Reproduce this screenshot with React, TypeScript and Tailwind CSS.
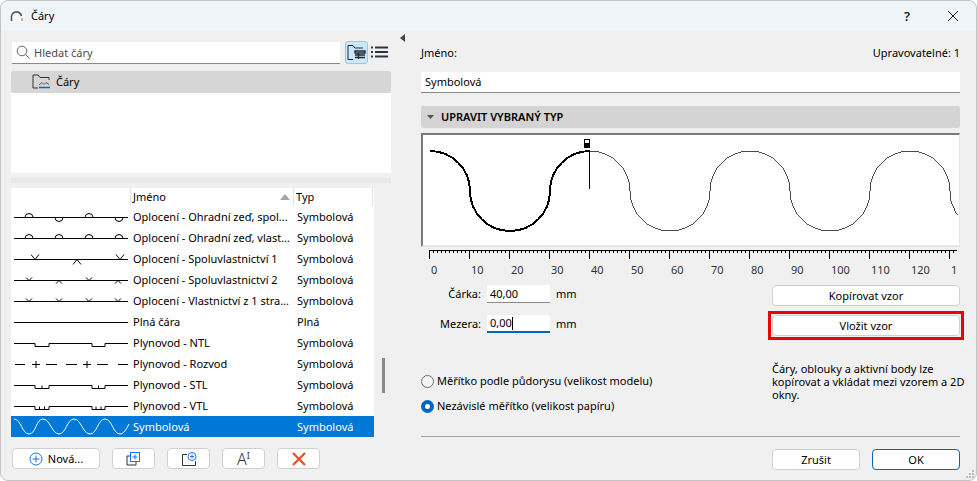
import React from "react";

type Swatch = "arcAlt" | "arcUp" | "xBig" | "xSmallAlt" | "xSmall" | "solid" | "ntl" | "rozvod" | "stl" | "vtl" | "wave";

const rows: { name: string; type: string; swatch: Swatch }[] = [
  { name: "Oplocení - Ohradní zeď, spol...", type: "Symbolová", swatch: "arcAlt" },
  { name: "Oplocení - Ohradní zeď, vlast...", type: "Symbolová", swatch: "arcUp" },
  { name: "Oplocení - Spoluvlastnictví 1", type: "Symbolová", swatch: "xBig" },
  { name: "Oplocení - Spoluvlastnictví 2", type: "Symbolová", swatch: "xSmallAlt" },
  { name: "Oplocení - Vlastnictví z 1 stra...", type: "Symbolová", swatch: "xSmall" },
  { name: "Plná čára", type: "Plná", swatch: "solid" },
  { name: "Plynovod - NTL", type: "Symbolová", swatch: "ntl" },
  { name: "Plynovod - Rozvod", type: "Symbolová", swatch: "rozvod" },
  { name: "Plynovod - STL", type: "Symbolová", swatch: "stl" },
  { name: "Plynovod - VTL", type: "Symbolová", swatch: "vtl" },
  { name: "Symbolová", type: "Symbolová", swatch: "wave" },
];

function swatchPath(kind: Swatch): string {
  const y = 11.5;
  const line = `M3 ${y}H117`;
  const arc = (x: number, up: boolean) => `M${x - 4} ${y}a4 4 0 0 ${up ? 1 : 0} 8 0`;
  const vee = (x: number, h: number, w: number, up: boolean) =>
    `M${x - w} ${up ? y - h : y + h}L${x} ${y}L${x + w} ${up ? y - h : y + h}`;
  const step = "M3 11.5H24V14.5H38V11.5H81V14.5H94V11.5H117";
  switch (kind) {
    case "arcAlt":
      return `${line}${arc(18, true)}${arc(48, false)}${arc(78, true)}${arc(108, false)}`;
    case "arcUp":
      return `${line}${arc(18, true)}${arc(48, true)}${arc(78, true)}${arc(108, true)}`;
    case "xBig":
      return `${line}${vee(24, 5, 4, true)}${vee(66, 5, 4, false)}${vee(109, 5, 4, true)}`;
    case "xSmallAlt":
      return `${line}${vee(18, 3, 3, true)}${vee(48, 3, 3, false)}${vee(78, 3, 3, true)}${vee(107, 3, 3, false)}`;
    case "xSmall":
      return `${line}${vee(18, 3, 3, true)}${vee(48, 3, 3, true)}${vee(78, 3, 3, true)}${vee(107, 3, 3, true)}`;
    case "solid":
      return line;
    case "ntl":
      return step;
    case "rozvod":
      return `M4 ${y}H14M35 ${y}H46M55 ${y}H66M86 ${y}H97M107 ${y}H117M21 ${y}H29M25 8V15M72 ${y}H80M76 8V15`;
    case "stl":
      return `${step}M31 11.5V14.5M87.5 11.5V14.5`;
    case "vtl":
      return `${step}M28.5 11.5V14.5M33.5 11.5V14.5M85 11.5V14.5M90 11.5V14.5`;
    default:
      return "M3 3C10 3 11 18 18 18S25 3 32 3S41 18 48 18S56 3 63 3S72 18 79 18S87 3 94 3S102 18 109 18C113 18 116 12 118 8";
  }
}

function LineSwatch({ kind }: { kind: Swatch }) {
  const selected = kind === "wave";
  return (
    <svg width="120" height="21" viewBox="0 0 120 21" fill="none" className="shrink-0">
      <path d={swatchPath(kind)} stroke={selected ? "#ffffff" : "#000000"} strokeWidth="1" />
    </svg>
  );
}

function Ruler() {
  const ticks: React.ReactNode[] = [];
  for (let i = 0; i <= 131; i++) {
    const x = 8.5 + i * 4;
    const major = i % 10 === 0;
    ticks.push(<line key={i} x1={x} x2={x} y1={0} y2={major ? 9 : 3} stroke="#000" strokeWidth="1" />);
  }
  return (
    <svg width="539" height="12" viewBox="0 0 539 12" className="block">
      <line x1="8" x2="536" y1="0.5" y2="0.5" stroke="#000" />
      {ticks}
    </svg>
  );
}

function RulerLabels() {
  const labels = [0, 10, 20, 30, 40, 50, 60, 70, 80, 90, 100, 110, 120, 1];
  return (
    <div className="mt-[1px] flex h-[14px] overflow-hidden text-[#333]">
      {labels.map((label, i) => (
        <span key={i} className="w-[40px] shrink-0 pl-[4px] text-[11px] leading-[14px] first:ml-[6px]">
          {label}
        </span>
      ))}
    </div>
  );
}

function Button({ children, className }: { children: React.ReactNode; className?: string }) {
  return (
    <button
      className={`flex h-[21px] items-center justify-center rounded-[4px] border border-[#d0d0d0] bg-white text-[11px] text-black ${className ?? ""}`}
    >
      {children}
    </button>
  );
}

export default function App() {
  return (
    <div
      className="h-[481px] w-[977px] overflow-hidden bg-white"
      style={{ fontFamily: '"Noto Sans", sans-serif' }}
    >
      <div className="relative flex h-full flex-col rounded-[8px] border border-[#c4c4c4] bg-[#f0f0f0] text-[11px] leading-[14px] text-black">
        {/* title bar */}
        <div className="flex h-[30px] shrink-0 items-center rounded-t-[8px] bg-[#eff4f9]">
          <svg width="14" height="14" viewBox="0 0 14 14" fill="none" className="ml-[9px]">
            <rect width="14" height="14" fill="#f7f7f7" />
            <path d="M1.5 12V9a5 5 0 0 1 10-2" stroke="#555" strokeWidth="1.6" />
            <path d="M12 9v3" stroke="#999" strokeWidth="1.4" />
          </svg>
          <span className="ml-[7px] text-[11px]">Čáry</span>
          <span className="ml-auto mr-[37px] text-[13px] font-semibold text-[#222]">?</span>
          <svg width="12" height="12" viewBox="0 0 12 12" className="mr-[17px]">
            <path d="M1 1L11 11M11 1L1 11" stroke="#222" strokeWidth="1" />
          </svg>
        </div>

        <div className="flex flex-1">
          {/* left panel */}
          <div className="w-[399px] shrink-0 pl-[10px] pt-[10px]">
            <div className="flex h-[23px] items-start">
              <div className="ml-[1px] mt-[1px] flex h-[22px] w-[328px] items-center border-b border-[#8a8a8a] bg-white">
                <svg width="15" height="15" viewBox="0 0 15 15" fill="none" className="ml-[4px]">
                  <circle cx="6" cy="6" r="4.8" stroke="#666" />
                  <path d="M9.5 9.5L13.5 13.5" stroke="#666" />
                </svg>
                <span className="ml-[3px] text-[#4d4d4d]">Hledat čáry</span>
              </div>
              <div className="ml-[5px] flex h-[23px] w-[23px] items-center justify-center rounded-[3px] border border-[#8fcbf5] bg-[#cde8fb]">
                <svg width="19" height="17" viewBox="0 0 19 17" fill="none">
                  <path d="M1 15.5V1.5H6L8 4H16M1 15.5H6" stroke="#1f2a33" />
                  <path d="M8 7H18V9H8ZM8 11H18M8 13.5H18M11.5 9V15" stroke="#1f2a33" strokeWidth="1.4" />
                </svg>
              </div>
              <svg width="17" height="12" viewBox="0 0 17 12" className="ml-[3px] mt-[5px]">
                <path d="M0 1.5H2M4 1.5H17M0 6H2M4 6H17M0 10.5H2M4 10.5H17" stroke="#2b3640" strokeWidth="2" />
              </svg>
            </div>

            <div className="mt-[7px] h-[102px] w-[380px] bg-white">
              <div className="flex h-[22px] items-center rounded-[2px] bg-[#d6d6d6]">
                <svg width="19" height="16" viewBox="0 0 19 16" fill="none" className="ml-[21px]">
                  <path d="M1 14V1H6L8 3.5H17V6M1 14H6" stroke="#333" />
                  <path d="M7 11L10 8.5L12 10.5L14 8.5L17 10.5" stroke="#333" strokeWidth="0.8" />
                  <path d="M7 13.5H18" stroke="#0a64c8" strokeWidth="1.5" />
                </svg>
                <span className="ml-[5px]">Čáry</span>
              </div>
            </div>

            <div className="mt-[5px] h-[5px] w-[380px] bg-[#e8e8e8]" />

            <div className="mt-[5px] flex items-start">
              <div className="w-[363px] bg-white">
                <div className="flex h-[18px] items-center">
                  <div className="h-full w-[120px] border-r border-[#e4e4e4]" />
                  <div className="flex h-full w-[163px] items-center justify-between border-r border-[#e4e4e4] pl-[2px] pr-[3px]">
                    <span>Jméno</span>
                    <svg width="10" height="6" viewBox="0 0 10 6">
                      <path d="M0 6L5 0L10 6Z" fill="#a6a6a6" />
                    </svg>
                  </div>
                  <div className="flex h-full w-[79px] items-center border-r border-[#e4e4e4] pl-[2px]">Typ</div>
                </div>
                {rows.map((row) => (
                  <div
                    key={row.name}
                    className={`flex h-[21px] items-center ${row.swatch === "wave" ? "bg-[#0078d7] text-white" : ""}`}
                  >
                    <LineSwatch kind={row.swatch} />
                    <span className="w-[163px] shrink-0 whitespace-nowrap pl-[2px]">{row.name}</span>
                    <span className="pl-[3px]">{row.type}</span>
                  </div>
                ))}
              </div>
              <div className="ml-[8px] mt-[170px] h-[35px] w-[3px] bg-[#8a8a8a]" />
            </div>

            <div className="mt-[11px] flex">
              <Button className="ml-[1px] w-[88px]">
                <svg width="14" height="14" viewBox="0 0 14 14" fill="none" className="mr-[5px]">
                  <circle cx="7" cy="7" r="6" stroke="#1a73e8" />
                  <path d="M7 3.5V10.5M3.5 7H10.5" stroke="#1a73e8" />
                </svg>
                Nová...
              </Button>
              <Button className="ml-[12px] w-[43px]">
                <svg width="15" height="14" viewBox="0 0 15 14" fill="none">
                  <path d="M4 4H1V13H10V10" stroke="#333" />
                  <rect x="4.5" y="0.5" width="9" height="9" stroke="#1a73e8" />
                  <path d="M9 2.5V7.5M6.5 5H11.5" stroke="#1a73e8" />
                </svg>
              </Button>
              <Button className="ml-[12px] w-[43px]">
                <svg width="16" height="14" viewBox="0 0 16 14" fill="none">
                  <path d="M1.5 13.5V2.5H6M1.5 13.5H14.5V9" stroke="#333" />
                  <circle cx="11" cy="4.5" r="4" stroke="#1a73e8" />
                  <path d="M11 2.5V6.5M9 4.5H13" stroke="#1a73e8" />
                </svg>
              </Button>
              <Button className="ml-[12px] w-[43px]">
                <span className="text-[16px] font-light leading-none text-[#333]">A</span>
                <span className="mb-[6px] text-[9px] leading-none text-[#333]">I</span>
              </Button>
              <Button className="ml-[12px] w-[43px]">
                <svg width="14" height="14" viewBox="0 0 14 14">
                  <path d="M1 1L13 13M13 1L1 13" stroke="#f04a23" strokeWidth="2.2" />
                </svg>
              </Button>
            </div>
          </div>

          {/* right panel */}
          <div className="relative w-[576px] shrink-0 pl-[21px] pr-[16px] pt-[15px]">
            <svg width="5" height="8" viewBox="0 0 5 8" className="absolute left-[0px] top-[3px]">
              <path d="M5 0V8L0 4Z" fill="#444" />
            </svg>

            <div className="flex h-[14px] justify-between">
              <span>Jméno:</span>
              <span>Upravovatelné: 1</span>
            </div>
            <div className="mt-[12px] flex h-[21px] items-center border-b border-[#8a8a8a] bg-white pl-[4px]">
              Symbolová
            </div>
            <div className="mt-[13px] flex h-[22px] items-center rounded-[2px] bg-[#d4d4d4] font-semibold">
              <svg width="7" height="4" viewBox="0 0 7 4" className="ml-[6px] mr-[7px]">
                <path d="M0 0H7L3.5 4Z" fill="#555" />
              </svg>
              UPRAVIT VYBRANÝ TYP
            </div>

            <div className="mt-[5px] h-[114px] border-b-2 border-l-2 border-r border-t-2 border-b-[#e6e6e6] border-l-[#7a7a7a] border-r-[#e6e6e6] border-t-[#7a7a7a] bg-white">
              <svg width="537" height="110" viewBox="423 135 537 110" fill="none" className="block" shapeRendering="crispEdges">
                <path d="M430 151A40 40 0 0 1 470 191A40 40 0 0 0 510 231A40 40 0 0 0 550 191A40 40 0 0 1 590 151" stroke="#000" strokeWidth="2" />
                <path d="M590 151A40 40 0 0 1 630 191A40 40 0 0 0 670 231A40 40 0 0 0 710 191A40 40 0 0 1 750 151A40 40 0 0 1 790 191A40 40 0 0 0 830 231A40 40 0 0 0 870 191A40 40 0 0 1 910 151A40 40 0 0 1 950 191A40 40 0 0 0 958 215" stroke="#000" strokeWidth="0.7" />
                <path d="M589.5 151V189" stroke="#000" />
                <rect x="584.5" y="139.5" width="5" height="4" stroke="#000" fill="#fff" />
                <rect x="584" y="144" width="6" height="4" fill="#000" />
              </svg>
            </div>

            <div className="mt-[3px]">
              <Ruler />
              <RulerLabels />
            </div>

            <div className="mt-[8px] flex h-[151px]">
              <div className="w-[351px] shrink-0">
                <div className="flex h-[18px] items-center">
                  <span className="w-[60px] text-right">Čárka:</span>
                  <div className="ml-[6px] flex h-[18px] w-[63px] items-center border-b border-[#8a8a8a] bg-white pl-[3px]">
                    40,00
                  </div>
                  <span className="ml-[6px]">mm</span>
                </div>
                <div className="mt-[12px] flex h-[18px] items-center">
                  <span className="w-[60px] text-right">Mezera:</span>
                  <div className="ml-[6px] flex h-[18px] w-[63px] items-center border-b-2 border-[#0067c0] bg-white pl-[3px]">
                    0,00
                    <span className="h-[13px] w-[1px] bg-black" />
                  </div>
                  <span className="ml-[6px]">mm</span>
                </div>

                <div className="mt-[41px] flex h-[14px] items-center">
                  <span className="h-[13px] w-[13px] rounded-full border border-[#6e6e6e] bg-[#f5f5f5]" />
                  <span className="ml-[3px]">Měřítko podle půdorysu (velikost modelu)</span>
                </div>
                <div className="mt-[11px] flex h-[14px] items-center">
                  <span className="flex h-[13px] w-[13px] items-center justify-center rounded-full bg-[#0067c0]">
                    <span className="h-[5px] w-[5px] rounded-full bg-white" />
                  </span>
                  <span className="ml-[3px]">Nezávislé měřítko (velikost papíru)</span>
                </div>
              </div>

              <div className="w-[188px]">
                <Button className="w-full">Kopírovat vzor</Button>
                <div className="-mx-[4px] mt-[5px] border-[3px] border-[#f00000] p-[1px]">
                  <Button className="w-full">Vložit vzor</Button>
                </div>
                <p className="-mr-[8px] mt-[22px] leading-[13px]">
                  Čáry, oblouky a aktivní body lze
                  <br />
                  kopírovat a vkládat mezi vzorem a 2D
                  <br />
                  okny.
                </p>
              </div>
            </div>

            <div className="h-[1px] bg-[#a0a0a0]" />

            <div className="mt-[12px] flex justify-end gap-[12px]">
              <Button className="w-[88px]">Zrušit</Button>
              <Button className="w-[88px] border-[#0067c0]!">OK</Button>
            </div>
          </div>
        </div>

        <svg width="10" height="10" viewBox="0 0 10 10" className="absolute bottom-[1px] right-[1px]">
          <path d="M7 1h2v2h-2zM4 4h2v2h-2zM7 4h2v2h-2zM1 7h2v2h-2zM4 7h2v2h-2zM7 7h2v2h-2z" fill="#bdbdbd" />
        </svg>
      </div>
    </div>
  );
}
